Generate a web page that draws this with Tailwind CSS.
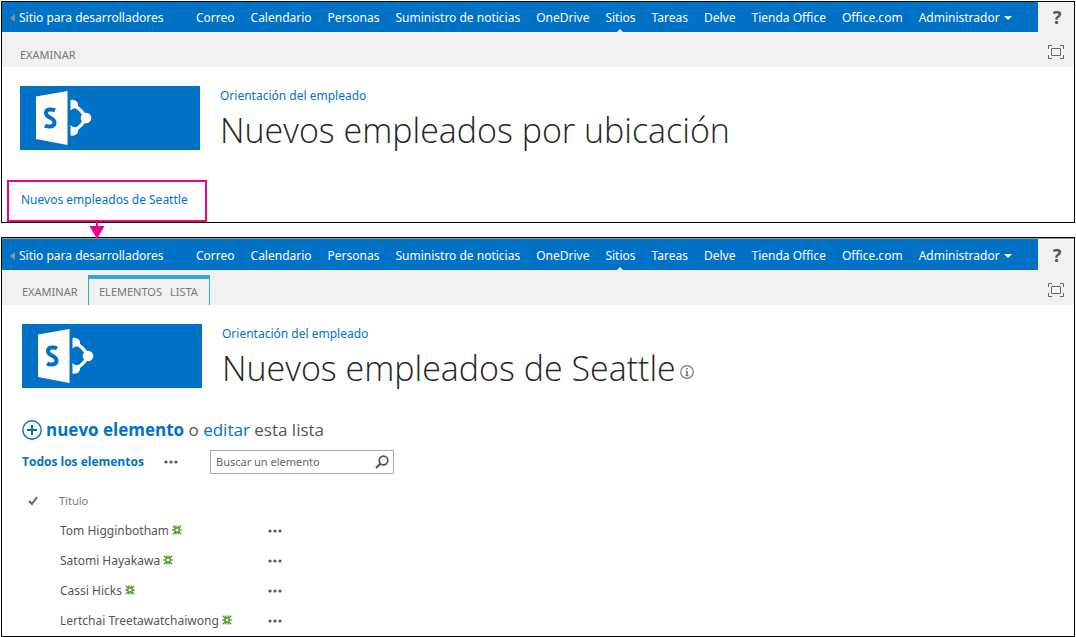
<!DOCTYPE html>
<html lang="es">
<head>
<meta charset="utf-8">
<meta name="viewport" content="width=device-width, initial-scale=1">
<title>Nuevos empleados</title>
<script src="https://cdn.jsdelivr.net/npm/@tailwindcss/browser@4"></script>
</head>
<body class="bg-white p-px font-['Noto_Sans','Open_Sans',sans-serif] text-xs text-[#555]">
<svg class="hidden" aria-hidden="true">
  <symbol id="logo" viewBox="0 0 180 64">
    <path fill="#fff" d="M16 10.500 47.500 5v54L16 53z"/>
    <path fill="none" stroke="#0072c6" stroke-width="4" d="M35 24.500c-2.500-1.300-9-2-9 2.500 0 5.500 8.500 4 8.500 9.500 0 5-7 4.500-9.500 3"/>
    <path fill="none" stroke="#fff" stroke-width="3.200" d="M55 20q7 4 11 12-4 8-11 12"/>
    <path fill="#fff" d="M50.500 14q5-1 7 2.500 1.500 3-1 6-3-1-6 2zM50.500 39q3 3 6 2 2.500 3 1 6-2 3.500-7 2.500z"/>
    <circle cx="66" cy="32" r="5.300" fill="#fff"/>
  </symbol>
  <symbol id="focus" viewBox="0 0 16 14">
    <path fill="none" stroke="#666" d="M.5 4V.5H4M12 .5h3.500V4M15.500 10v3.500H12M4 13.500H.5V10M3.500 3.500h9v7h-9z"/>
  </symbol>
  <symbol id="nuevo" viewBox="0 0 10 10">
    <path fill="none" stroke="#4a9a1e" stroke-width="1.300" d="M3 3h4v4H3zM3 3 .8.8M7 3 9.200.8M3 7 .8 9.200M7 7l2.200 2.200M3.800 3V.5M6.200 3V.5M3.800 7v2.500M6.200 7v2.500M2.500 5H.3M7.500 5h2.200"/>
  </symbol>
  <symbol id="dots" viewBox="0 0 14 4">
    <circle cx="2" cy="2" r="1.600"/><circle cx="7" cy="2" r="1.600"/><circle cx="12" cy="2" r="1.600"/>
  </symbol>
</svg>

<main class="relative flex flex-col gap-3.5">
  <section class="border border-black">
    <header class="flex bg-[#f1f1f1]">
      <nav class="flex h-[30px] grow items-center bg-[#0072c6] pt-0.5 pl-[7px] text-white" aria-label="Principal">
        <a href="#" class="flex w-[187px] items-center gap-1 whitespace-nowrap"><svg class="h-2 w-1.5 fill-[#8a9299]" viewBox="0 0 6 8"><path d="M6 0v8L1 4z"/></svg>Sitio para desarrolladores</a>
        <div class="flex h-full items-center gap-4 whitespace-nowrap">
          <a href="#">Correo</a><a href="#">Calendario</a><a href="#">Personas</a><a href="#">Suministro de noticias</a><a href="#">OneDrive</a>
          <a href="#" class="relative flex h-full items-center">Sitios<svg class="absolute bottom-0 left-1/2 h-[3px] w-1.5 -translate-x-1/2 fill-[#f1f1f1]" viewBox="0 0 6 3"><path d="M3 0l3 3H0z"/></svg></a>
          <a href="#">Tareas</a><a href="#">Delve</a><a href="#">Tienda Office</a><a href="#">Office.com</a>
          <button class="flex items-center gap-1">Administrador<svg class="h-1 w-2 fill-white" viewBox="0 0 8 4"><path d="M0 0h8L4 4z"/></svg></button>
        </div>
      </nav>
      <button class="w-9 pl-0.5 text-lg/7 font-bold text-[#555]" aria-label="Ayuda">?</button>
    </header>
    <div class="flex h-[35px] items-end justify-between bg-[#f1f1f1] pr-2.5 pl-[18px] text-[11px] text-[#777]">
      <button class="mb-1">EXAMINAR</button>
      <button class="mb-2" aria-label="Enfocar contenido"><svg class="h-3.5 w-4"><use href="#focus"/></svg></button>
    </div>
    <div class="flex gap-5 pt-[19px] pl-[18px]">
      <svg class="h-16 w-[180px] shrink-0 bg-[#0072c6]" viewBox="0 0 180 64" role="img" aria-label="SharePoint"><use href="#logo"/></svg>
      <div>
        <a href="#" class="block leading-5 text-[#0072c6]">Orientación del empleado</a>
        <h1 class="font-['Open_Sans',sans-serif] text-[34px]/12 font-light text-[#262626]">Nuevos empleados por ubicación</h1>
      </div>
    </div>
    <a href="#" class="mt-[26px] ml-[5px] flex h-[42px] w-[200px] items-center border-2 border-[#ec008c] pb-0.5 pl-3 text-[#0072c6]">Nuevos empleados de Seattle</a>
  </section>

  <svg class="absolute top-[220px] left-[88px] h-[18px] w-4 fill-[#ec008c]" viewBox="0 0 16 18" aria-hidden="true"><path d="M7 0h2v5h6.500L8 18 .5 5H7z"/></svg>

  <section class="border border-black">
    <header class="flex border-t border-[#999] bg-[#f1f1f1]">
      <nav class="flex h-[31px] grow items-center bg-[#0072c6] pt-0.5 pl-[7px] text-white" aria-label="Principal de la lista">
        <a href="#" class="flex w-[187px] items-center gap-1 whitespace-nowrap"><svg class="h-2 w-1.5 fill-[#8a9299]" viewBox="0 0 6 8"><path d="M6 0v8L1 4z"/></svg>Sitio para desarrolladores</a>
        <div class="flex h-full items-center gap-4 whitespace-nowrap">
          <a href="#">Correo</a><a href="#">Calendario</a><a href="#">Personas</a><a href="#">Suministro de noticias</a><a href="#">OneDrive</a>
          <a href="#" class="relative flex h-full items-center">Sitios<svg class="absolute bottom-0 left-1/2 h-[3px] w-1.5 -translate-x-1/2 fill-[#f1f1f1]" viewBox="0 0 6 3"><path d="M3 0l3 3H0z"/></svg></a>
          <a href="#">Tareas</a><a href="#">Delve</a><a href="#">Tienda Office</a><a href="#">Office.com</a>
          <button class="flex items-center gap-1">Administrador<svg class="h-1 w-2 fill-white" viewBox="0 0 8 4"><path d="M0 0h8L4 4z"/></svg></button>
        </div>
      </nav>
      <button class="w-9 pl-0.5 text-lg/7 font-bold text-[#555]" aria-label="Ayuda">?</button>
    </header>
    <div class="flex h-[35px] items-end justify-between bg-[#f1f1f1] pr-2.5 pl-5 text-[11px] text-[#777]">
      <div class="flex h-[30px]">
        <button class="w-[66px] pt-1 text-left">EXAMINAR</button>
        <div class="flex w-[122px] gap-2 border-x border-t-4 border-[#35a8cf] pl-2.5">
          <button>ELEMENTOS</button><button>LISTA</button>
        </div>
      </div>
      <button class="mb-2" aria-label="Enfocar contenido"><svg class="h-3.5 w-4"><use href="#focus"/></svg></button>
    </div>
    <div class="flex gap-5 pt-[19px] pl-5">
      <svg class="h-16 w-[180px] shrink-0 bg-[#0072c6]" viewBox="0 0 180 64" role="img" aria-label="SharePoint"><use href="#logo"/></svg>
      <div>
        <a href="#" class="block leading-5 text-[#0072c6]">Orientación del empleado</a>
        <h2 class="flex items-center gap-1 font-['Open_Sans',sans-serif] text-[34px]/12 font-light text-[#262626]">Nuevos empleados de Seattle<svg class="mt-2 size-3.5" viewBox="0 0 14 14" fill="none" stroke="#777"><circle cx="7" cy="7" r="6.300" stroke-width="1.200"/><path stroke-width="1.600" d="M7 3v1.600M7 6v5M5.500 6.500H7M5.500 10.500h3"/></svg></h2>
      </div>
    </div>
    <p class="mt-6 flex items-center gap-1 pl-5 font-['Open_Sans',sans-serif] text-[17px]/7">
      <svg class="size-5 shrink-0" viewBox="0 0 20 20" fill="none" stroke="#0072c6"><circle cx="10" cy="10" r="9.200" stroke-width="1.400"/><path stroke-width="2" d="M10 5v10M5 10h10"/></svg>
      <span><a href="#" class="font-bold text-[#0072c6]">nuevo elemento</a> o <a href="#" class="text-[#0072c6]">editar</a> esta lista</span>
    </p>
    <div class="mt-1.5 flex items-center pl-5">
      <a href="#" class="w-[142px] font-['Open_Sans',sans-serif] font-bold text-[#0072c6]">Todos los elementos</a>
      <button class="w-[46px]" aria-label="Más vistas"><svg class="h-1 w-3.5 fill-[#555]"><use href="#dots"/></svg></button>
      <form class="flex h-6 w-[184px] items-center border border-[#ababab] pr-1 pl-[5px]">
        <input type="text" placeholder="Buscar un elemento" aria-label="Buscar un elemento" class="min-w-0 grow text-[11px] outline-none placeholder:text-[#666]">
        <button type="button" aria-label="Buscar"><svg class="size-3.5" viewBox="0 0 14 14" fill="none" stroke="#555"><circle cx="8.500" cy="5.500" r="4.300" stroke-width="1.700"/><path stroke-width="2.200" d="M5.500 8.500 1 13"/></svg></button>
      </form>
    </div>
    <table class="mt-3 ml-5 table-fixed">
      <thead>
        <tr class="h-[30px] text-left text-[11px] text-[#777]">
          <th class="w-[37px] pl-1.5"><svg class="h-2.5 w-2.5" viewBox="0 0 10 10" fill="none" stroke="#666" stroke-width="2" role="img" aria-label="Seleccionar"><path d="M1 5l3 3 5-7"/></svg></th>
          <th class="w-[209px] font-normal">Título</th><th class="w-5"></th>
        </tr>
      </thead>
      <tbody>
        <tr class="h-[30px]"><td></td><td class="pl-px">Tom Higginbotham <svg class="inline size-2.5 align-baseline"><use href="#nuevo"/></svg></td><td><button class="flex" aria-label="Abrir menú"><svg class="h-1 w-3.5 fill-[#555]"><use href="#dots"/></svg></button></td></tr>
        <tr class="h-[30px]"><td></td><td class="pl-px">Satomi Hayakawa <svg class="inline size-2.5 align-baseline"><use href="#nuevo"/></svg></td><td><button class="flex" aria-label="Abrir menú"><svg class="h-1 w-3.5 fill-[#555]"><use href="#dots"/></svg></button></td></tr>
        <tr class="h-[30px]"><td></td><td class="pl-px">Cassi Hicks <svg class="inline size-2.5 align-baseline"><use href="#nuevo"/></svg></td><td><button class="flex" aria-label="Abrir menú"><svg class="h-1 w-3.5 fill-[#555]"><use href="#dots"/></svg></button></td></tr>
        <tr class="h-[30px]"><td></td><td class="pl-px">Lertchai Treetawatchaiwong <svg class="inline size-2.5 align-baseline"><use href="#nuevo"/></svg></td><td><button class="flex" aria-label="Abrir menú"><svg class="h-1 w-3.5 fill-[#555]"><use href="#dots"/></svg></button></td></tr>
      </tbody>
    </table>
  </section>
</main>
</body>
</html>
